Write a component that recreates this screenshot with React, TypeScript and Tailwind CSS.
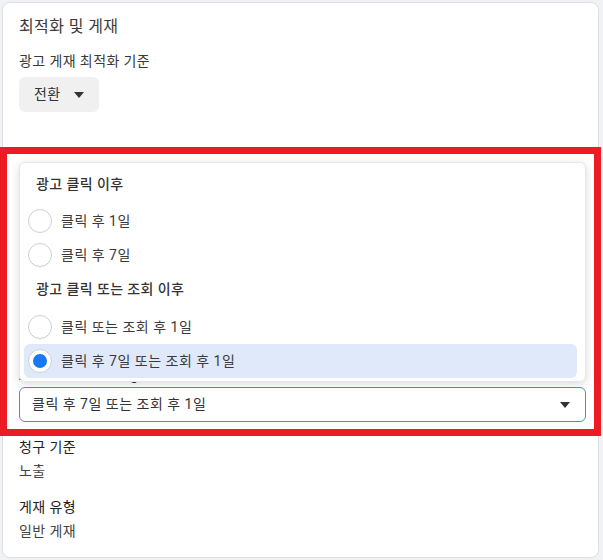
import React from 'react';

const font = { fontFamily: 'Roboto, "Noto Sans CJK KR", "Noto Sans", sans-serif' };

// Small filled down caret used by the dropdown buttons
const Caret: React.FC = () => (
  <svg width="10" height="6" viewBox="0 0 10 6" className="text-[#333]">
    <path d="M0 0h10L5 6z" fill="currentColor" />
  </svg>
);

const Radio: React.FC<{ checked?: boolean }> = ({ checked }) => (
  <span className="w-6 h-6 rounded-full border border-[#ccd0d5] bg-white flex items-center justify-center shrink-0">
    {checked && <span className="w-[14px] h-[14px] rounded-full bg-[#1877f2]" />}
  </span>
);

const OptionRow: React.FC<{ label: string; checked?: boolean; className?: string }> = ({ label, checked, className = '' }) => (
  <div className={`h-[34px] flex items-center gap-[9px] pl-1 rounded-md ${checked ? 'bg-[#e0e9fa]' : ''} ${className}`}>
    <Radio checked={checked} />
    <span className="text-[14px] text-[#3a3a3a] tracking-[0.5px]">{label}</span>
  </div>
);

const GroupHeader: React.FC<{ label: string }> = ({ label }) => (
  <div className="h-[34px] flex items-center pl-3 text-[14px] font-medium text-[#333] tracking-[0.4px]">{label}</div>
);

export default function App() {
  return (
    <div className="relative w-[603px] h-[560px] bg-[#f0f2f5] pl-[2px] pt-[2px] overflow-hidden" style={font}>
      {/* Card */}
      <div className="relative w-[597px] h-[556px] bg-white border border-[#dddfe2] rounded-lg pl-4 pr-3 pt-[12px] tracking-[0.4px]">
        <div className="text-[16px] leading-6 text-[#3a3a3a]">최적화 및 게재</div>
        <div className="mt-3 text-[14px] leading-5 text-[#3a3a3a]">광고 게재 최적화 기준</div>
        <button className="mt-[6px] h-[35px] px-[15px] rounded-md bg-[#f0f0f0] flex items-center gap-[13px] text-[14px] text-[#333]">
          전환
          <Caret />
        </button>

        <div className="mt-[253px] text-[14px] leading-5 text-[#333] flex items-center gap-1">
          Attribution setting
          <span className="w-[12px] h-[12px] rounded-full border border-[#606770] text-[8px] leading-none flex items-center justify-center">i</span>
        </div>
        <div className="mt-[2px] h-[35px] rounded-md border border-[#4a8ae8] flex items-center justify-between pl-3 pr-[15px] text-[14px] text-[#333]">
          <span className="tracking-[0.5px]">클릭 후 7일 또는 조회 후 1일</span>
          <Caret />
        </div>

        <div className="mt-[13px] text-[14px] leading-6 text-[#222]">청구 기준</div>
        <div className="text-[14px] leading-6 text-[#444]">노출</div>
        <div className="mt-3 text-[14px] leading-6 text-[#222]">게재 유형</div>
        <div className="text-[14px] leading-6 text-[#444]">일반 게재</div>

        {/* Open dropdown menu */}
        <div className="absolute left-4 top-[159px] w-[567px] bg-white rounded-md border border-[#e4e6eb] shadow-[0_2px_8px_rgba(0,0,0,0.15)] pt-1 pb-[3px] pl-1 pr-2">
          <GroupHeader label="광고 클릭 이후" />
          <OptionRow label="클릭 후 1일" className="mt-[3px]" />
          <OptionRow label="클릭 후 7일" />
          <GroupHeader label="광고 클릭 또는 조회 이후" />
          <OptionRow label="클릭 또는 조회 후 1일" className="mt-1" />
          <OptionRow label="클릭 후 7일 또는 조회 후 1일" checked />
        </div>
      </div>

      {/* Red annotation frame */}
      <div className="absolute left-0 top-[147px] w-[601px] h-[289px] border-[7px] border-[#ed1c24]" />
    </div>
  );
}
